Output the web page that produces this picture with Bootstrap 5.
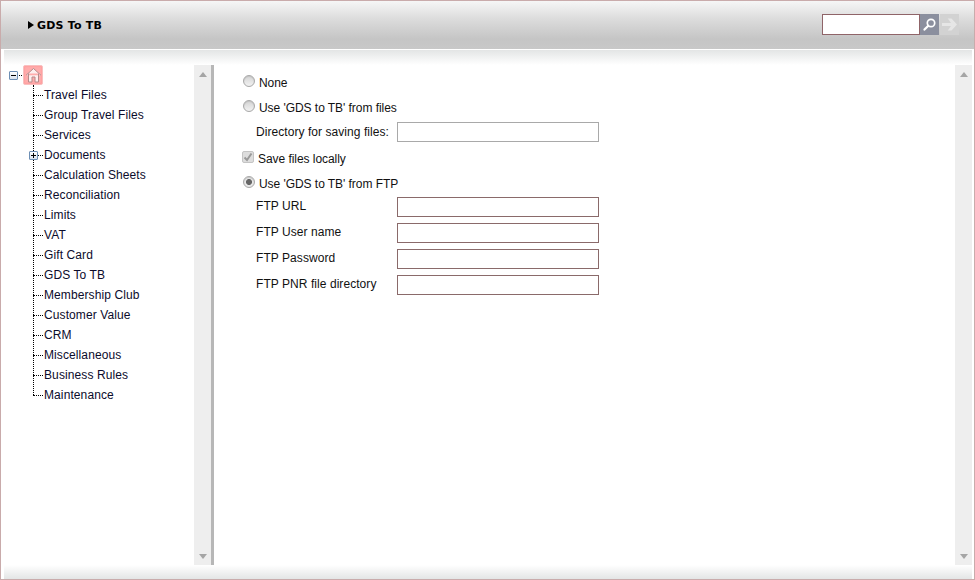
<!DOCTYPE html>
<html lang="en">
<head>
<meta charset="utf-8">
<title>GDS To TB</title>
<link rel="stylesheet" href="https://cdn.jsdelivr.net/npm/bootstrap@5.3.0/dist/css/bootstrap.min.css">
<style>
html,body{height:100%;margin:0;overflow:hidden}
body{font-family:"Liberation Sans",Arial,sans-serif;font-size:12px;color:#111;background:#fff}
.app-frame{width:975px;height:580px;border:1px solid #c9abab;display:flex;flex-direction:column;background:#fff}
.top-bar{height:48px;flex:none;background:linear-gradient(#f6f6f6 0,#dcdcdc 18px,#c5c5c5 38px,#c8c8c8 48px);padding:0 0 0 27px}
.page-title{font-family:"DejaVu Sans",Verdana,sans-serif;font-weight:700;font-size:11px;letter-spacing:.2px;color:#000;line-height:1}
.title-arrow{width:0;height:0;border-left:6px solid #000;border-top:4px solid transparent;border-bottom:4px solid transparent;margin-right:3px}
.search-box{width:98px;height:21px;border:1px solid #8f6468;background:#fff;border-radius:0;padding:0 3px;outline:0;display:block}
.search-btn,.go-btn{width:19px;height:21px;border:0;padding:0;display:flex;align-items:center;justify-content:center}
.search-btn{background:#8b8f9e}
.go-btn{background:#d2d2d2;margin-left:1px}
.search-wrap{margin-right:15px;margin-top:-1px}
.white-rule{height:1px;flex:none;background:#fff;margin:0 2px 0 3px}
.work-area{flex:1;min-height:0;margin:0 2px 0 3px;display:flex;flex-direction:column;background:#fff}
.fade-top{height:15px;flex:none;background:linear-gradient(#e3e5e5,#fff)}
.fade-bottom{height:14px;flex:none;background:linear-gradient(#fff,#e3e5e5)}
.panes{flex:1;min-height:0;display:flex}
.side-pane{width:190px;flex:none;position:relative;padding:0}
.sbar{width:17px;flex:none;background:#eee;display:flex;flex-direction:column;justify-content:space-between;align-items:center;padding:7px 0 6px}
.tri-up{width:0;height:0;border-left:4px solid transparent;border-right:4px solid transparent;border-bottom:5px solid #a5a5a5}
.tri-down{width:0;height:0;border-left:4px solid transparent;border-right:4px solid transparent;border-top:5px solid #a5a5a5}
.splitter{width:3px;flex:none;background:#b7b7b7}
.main-pane{flex:1;min-width:0;padding:5px 0 0 29px}
.tree-home{height:20px;display:flex;align-items:center;padding-left:5px}
.tree-dots{width:3px;border-top:1px dotted #000;margin:0 1px}
.home-node{width:20px;height:20px;background:#ffacac;border:1px solid #f9c0c0;border-radius:2px;display:flex;align-items:center;justify-content:center;box-shadow:inset 0 0 2px #f88}
.exp-box{width:9px;height:9px;border:1px solid #6d8fb5;background:linear-gradient(#fff,#d9e2ee);position:relative;flex:none;border-radius:1px}
.exp-box::before{content:"";position:absolute;left:1px;right:1px;top:3px;height:1px;background:#000}
.exp-plus::after{content:"";position:absolute;top:1px;bottom:1px;left:3px;width:1px;background:#000}
.tree-list{list-style:none;margin:0;padding:0 0 0 29px;position:relative}
.tree-list::before{content:"";position:absolute;left:29px;top:0;bottom:10px;border-left:1px dotted #000}
.tree-row{height:20px;line-height:20px;position:relative;padding-left:11px;color:#0b0b2b;white-space:nowrap;letter-spacing:.1px}
.tree-row::before{content:"";position:absolute;left:0;width:10px;top:10px;border-top:1px dotted #000}
.tree-row .exp-box{position:absolute;left:-4px;top:6px;z-index:1}
.opt-row{display:flex;align-items:center;height:25px;color:#111;letter-spacing:-.05px}
.opt-mark{appearance:none;-webkit-appearance:none;width:12px;height:12px;margin:0 4px 3px 0;border:1px solid #a8a8a8;border-radius:50%;background:linear-gradient(#d4d4d4,#f2f2f2);flex:none;box-shadow:inset 0 1px 1px #c4c4c4}
.opt-mark:checked{background:radial-gradient(circle,#666 0,#666 2.6px,#e8e8e8 3.4px)}
.check-mark{appearance:none;-webkit-appearance:none;width:12px;height:12px;margin:0 4px 3px -1px;border:1px solid #c4c4c4;border-radius:2px;background:#ddd center/10px 10px no-repeat url("data:image/svg+xml,%3Csvg xmlns='http://www.w3.org/2000/svg' viewBox='0 0 10 10'%3E%3Cpath d='M1.5 5.5 4 8 8.5 1.5' fill='none' stroke='%23999' stroke-width='2'/%3E%3C/svg%3E");flex:none}
.field-row{display:flex;align-items:center;padding-left:13px}
.field-row label{width:141px;flex:none;margin:0;letter-spacing:.06px}
.field-row input{width:202px;height:20px;border:1px solid #8a6a6a;background:#fff;border-radius:0;padding:0 3px;outline:0}
.field-row input.plain{border-color:#a9a9a9}
.field-row.dir-row{height:24px;margin-bottom:2px}
.ftp-rows{display:flex;flex-direction:column;gap:6px;margin-top:1px}
.ftp-rows label{margin-top:-3px}
.dir-row label{margin-top:-1px}
</style>
</head>
<body>
<div class="app-frame">
  <header class="top-bar d-flex align-items-center justify-content-between">
    <div class="d-flex align-items-center"><span class="title-arrow"></span><span class="page-title">GDS To TB</span></div>
    <div class="d-flex search-wrap">
      <input class="search-box" type="text" aria-label="Search">
      <button class="search-btn" type="button" aria-label="Search">
        <svg width="15" height="15" viewBox="0 0 15 15"><circle cx="9" cy="6" r="3.7" fill="none" stroke="#fff" stroke-width="1.7"/><path d="M6.300 8.700 2.500 12.600" stroke="#fff" stroke-width="2.200" stroke-linecap="round"/></svg>
      </button>
      <button class="go-btn" type="button" aria-label="Go">
        <svg width="17" height="15" viewBox="0 0 17 15"><path d="M1 6h9L6.800 1.500H10.500L16 7.500 10.500 13.500H6.800L10 9H1z" fill="#e6e6e6"/></svg>
      </button>
    </div>
  </header>
  <div class="white-rule"></div>
  <div class="work-area">
    <div class="fade-top"></div>
    <div class="panes">
      <nav class="side-pane">
        <div class="tree-home">
          <span class="exp-box"></span><span class="tree-dots"></span>
          <span class="home-node">
            <svg width="17" height="16" viewBox="0 0 17 16"><path d="M1 8.300 8.500 1.500 16 8.300M3.500 6.500V15h3.500V10h3v5h3.500V6.500" fill="#fdeeee" stroke="#b58a8a" stroke-width="1"/></svg>
          </span>
        </div>
        <ul class="tree-list">
          <li class="tree-row">Travel Files</li>
          <li class="tree-row">Group Travel Files</li>
          <li class="tree-row">Services</li>
          <li class="tree-row"><span class="exp-box exp-plus"></span>Documents</li>
          <li class="tree-row">Calculation Sheets</li>
          <li class="tree-row">Reconciliation</li>
          <li class="tree-row">Limits</li>
          <li class="tree-row">VAT</li>
          <li class="tree-row">Gift Card</li>
          <li class="tree-row">GDS To TB</li>
          <li class="tree-row">Membership Club</li>
          <li class="tree-row">Customer Value</li>
          <li class="tree-row">CRM</li>
          <li class="tree-row">Miscellaneous</li>
          <li class="tree-row">Business Rules</li>
          <li class="tree-row">Maintenance</li>
        </ul>
      </nav>
      <div class="sbar"><span class="tri-up"></span><span class="tri-down"></span></div>
      <div class="splitter"></div>
      <main class="main-pane">
        <div class="opt-row"><input class="opt-mark" type="radio" name="gds" id="o1" disabled><label for="o1">None</label></div>
        <div class="opt-row"><input class="opt-mark" type="radio" name="gds" id="o2" disabled><label for="o2">Use 'GDS to TB' from files</label></div>
        <div class="field-row dir-row"><label for="d1">Directory for saving files:</label><input class="plain" id="d1" type="text"></div>
        <div class="opt-row"><input class="check-mark" type="checkbox" id="c1" checked disabled><label for="c1">Save files locally</label></div>
        <div class="opt-row"><input class="opt-mark" type="radio" name="gds" id="o3" checked disabled><label for="o3">Use 'GDS to TB' from FTP</label></div>
        <div class="ftp-rows">
          <div class="field-row"><label for="f1">FTP URL</label><input id="f1" type="text"></div>
          <div class="field-row"><label for="f2">FTP User name</label><input id="f2" type="text"></div>
          <div class="field-row"><label for="f3">FTP Password</label><input id="f3" type="password"></div>
          <div class="field-row"><label for="f4">FTP PNR file directory</label><input id="f4" type="text"></div>
        </div>
      </main>
      <div class="sbar"><span class="tri-up"></span><span class="tri-down"></span></div>
    </div>
    <div class="fade-bottom"></div>
  </div>
</div>
<script src="https://cdn.jsdelivr.net/npm/bootstrap@5.3.0/dist/js/bootstrap.bundle.min.js"></script>
</body>
</html>
